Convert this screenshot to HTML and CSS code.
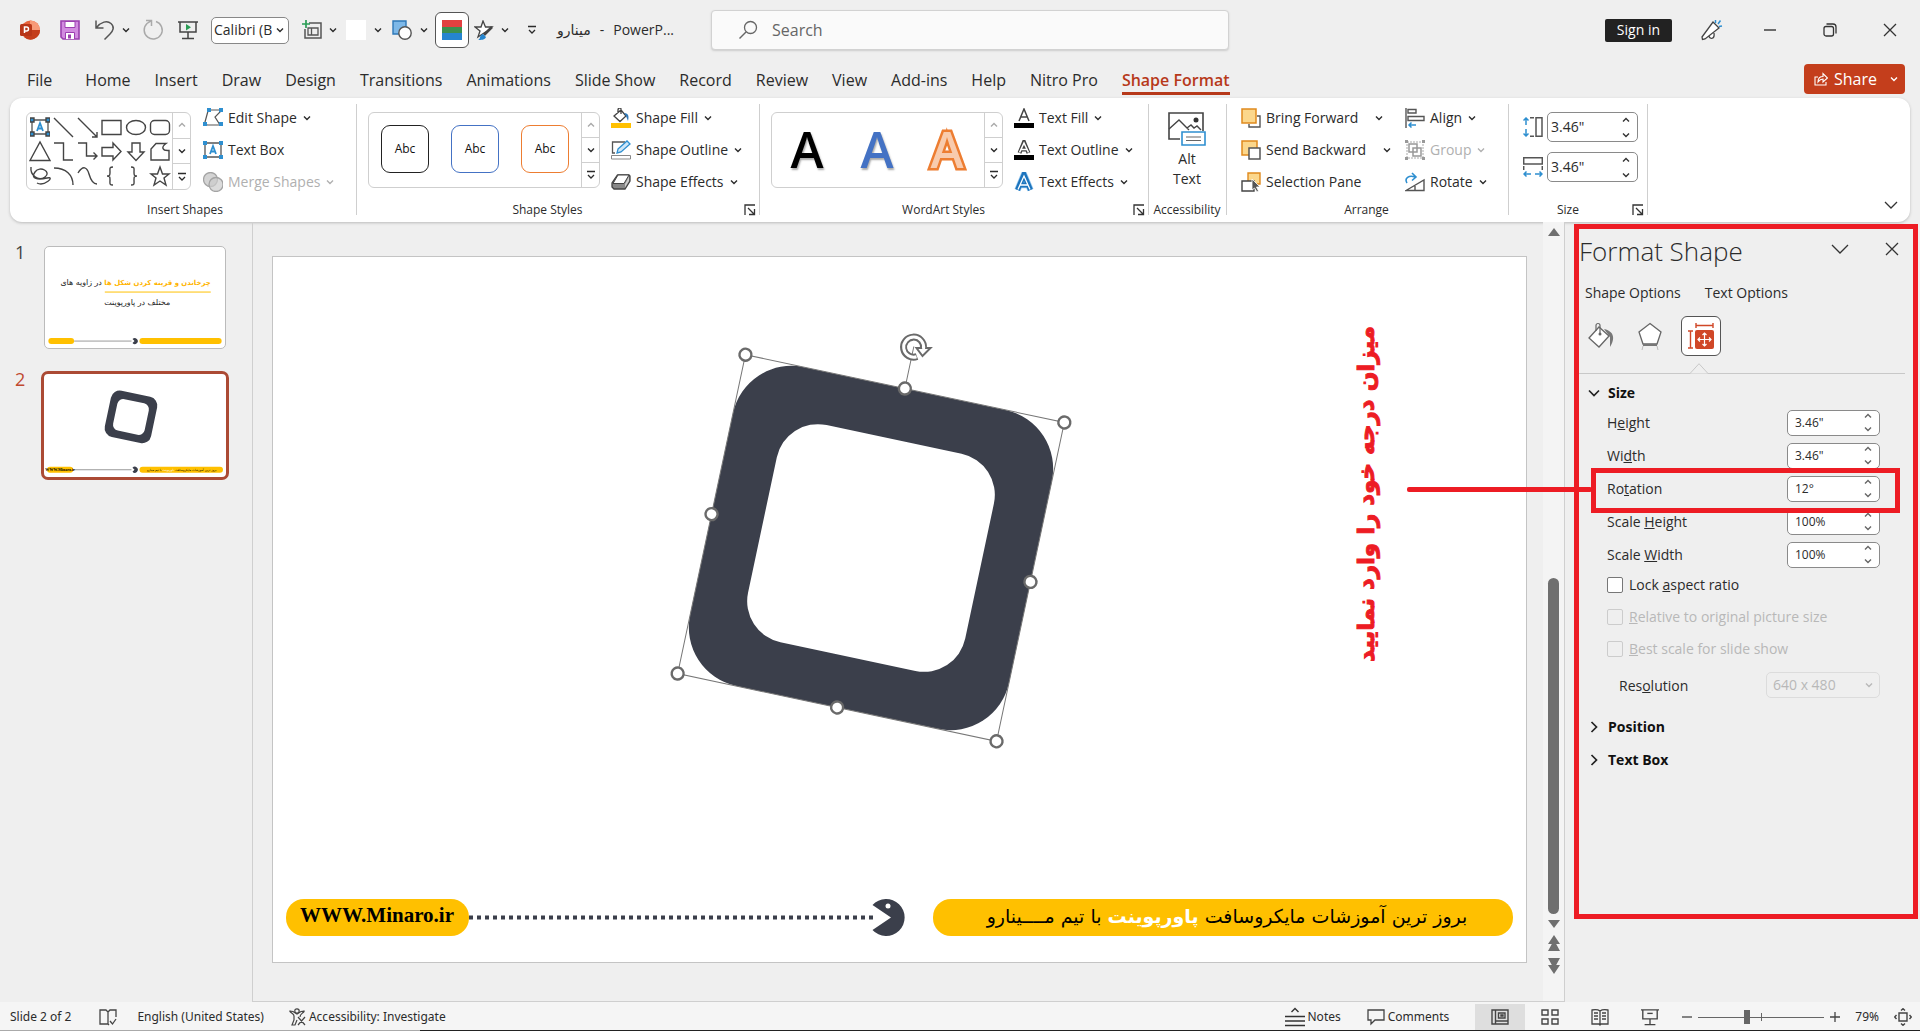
FILE: index.html
```html
<!DOCTYPE html>
<html lang="en">
<head>
<meta charset="utf-8">
<title>مینارو - PowerPoint</title>
<link rel="stylesheet" href="styles.css">
</head>
<body>
<svg class="defs" aria-hidden="true">
  <symbol id="chev" viewBox="0 0 8 8"><path d="M1 2.5 4 5.5 7 2.5" fill="none" stroke="currentColor" stroke-width="1.4"/></symbol>
  <symbol id="chev-up" viewBox="0 0 8 8"><path d="M1 5.5 4 2.5 7 5.5" fill="none" stroke="currentColor" stroke-width="1.4"/></symbol>
  <symbol id="more" viewBox="0 0 10 10"><path d="M1 1.5H9M2 5 5 8 8 5" fill="none" stroke="currentColor" stroke-width="1.3"/></symbol>
  <symbol id="launch" viewBox="0 0 12 12"><path d="M1 11V1H11M4 4 10 10M10.500 5V10.500H5" fill="none" stroke="#333" stroke-width="1.3"/></symbol>
  <symbol id="cross" viewBox="0 0 14 14"><path d="M1 1 13 13M13 1 1 13" stroke="#333" stroke-width="1.3"/></symbol>
  <symbol id="textbox" viewBox="0 0 20 20"><path d="M2 3H18V17H2Z" fill="#fff" stroke="#555" stroke-width="1.3"/><path d="M7 14 10 6 13 14M8 11.500H12" fill="none" stroke="#2e8fd0" stroke-width="1.8"/><path d="M0 1h4v4H0zM16 1h4v4h-4zM0 15h4v4H0zM16 15h4v4h-4z" fill="#2e8fd0"/></symbol>
  <symbol id="screen" viewBox="0 0 20 20"><path d="M0 2H20M2 2V12H18V2M10 12V18M4 18.500H16" fill="none" stroke="#444" stroke-width="1.5"/></symbol>
</svg>

<header class="titlebar">
  <div class="qat">
    <svg class="i20" viewBox="0 0 20 20"><circle cx="10.500" cy="10" r="9.500" fill="#e8643c"/><path d="M10 .5A9.500 9.500 0 0 1 20 10H10Z" fill="#f79a78"/><path d="M10 10H20A9.500 9.500 0 0 1 4 17Z" fill="#c43e1c"/><rect y="4" width="12" height="12" rx="1.500" fill="#b83618"/><path d="M4.500 13V7H6.500A1.900 1.900 0 0 1 6.500 11H4.500" fill="none" stroke="#fff" stroke-width="1.500"/></svg>
    <button class="ib" aria-label="Save"><svg class="i20" viewBox="0 0 20 20"><path d="M1 1H19V19H3L1 17Z" fill="#d28be0" stroke="#9c3fb0" stroke-width="1.600"/><path d="M5 1.500H15V7.500H5Z" fill="#fff" stroke="#9c3fb0"/><path d="M5.500 19V12.500H14.500V19" fill="#fff" stroke="#9c3fb0"/><path d="M8 14.500v4h3v-4z" fill="#9c3fb0"/></svg></button>
    <button class="ib" aria-label="Undo"><svg class="i22" viewBox="0 0 22 22"><path d="M2 1.500V9H9.500M2.500 8.500C7 3 13 1 17 4.500S19 12 16 15L10.500 20.500" fill="none" stroke="#555" stroke-width="1.500"/></svg></button>
    <button class="ib" aria-label="Undo options"><svg class="i8"><use href="#chev"/></svg></button>
    <button class="ib" aria-label="Repeat"><svg class="i22" viewBox="0 0 22 22"><path d="M4 1.500H9.500V7M14 2.500A9 9 0 1 1 5 4.500L9 1.800" fill="none" stroke="#a9a9a9" stroke-width="1.500"/></svg></button>
    <button class="ib" aria-label="From beginning"><svg class="i20" viewBox="0 0 20 20"><use href="#screen"/><path d="M8 4V10.500L13 7.200Z" fill="#2a9d55"/></svg></button>
    <label class="fontbox"><select aria-label="Font"><option>Calibri (Body)</option></select><svg class="i8"><use href="#chev"/></svg></label>
    <button class="ib" aria-label="New slide"><svg class="i20" viewBox="0 0 20 20"><path d="M7 3H19V18H3V9" fill="#eee" stroke="#555" stroke-width="1.500"/><path d="M6 8H16V15H6ZM9.500 8V15" fill="none" stroke="#555" stroke-width="1.300"/><path d="M4 0V8M0 4H8" stroke="#2a9d55" stroke-width="1.700"/></svg></button>
    <button class="ib" aria-label="New slide options"><svg class="i8"><use href="#chev"/></svg></button>
    <button class="ib" aria-label="Colour"><svg class="i20" viewBox="0 0 20 20"><path d="M0 0H20V20H0Z" fill="#fff"/></svg></button>
    <button class="ib" aria-label="Colour options"><svg class="i8"><use href="#chev"/></svg></button>
    <button class="ib" aria-label="Shapes"><svg class="i20" viewBox="0 0 20 20"><path d="M1 1H14V14H1Z" fill="#7db8e8" stroke="#2e78b8" stroke-width="1.400"/><circle cx="13" cy="13" r="6.200" fill="#fff" stroke="#555" stroke-width="1.400"/></svg></button>
    <button class="ib" aria-label="Shapes options"><svg class="i8"><use href="#chev"/></svg></button>
    <button class="ib swatch" aria-label="Gradient"><svg class="i20" viewBox="0 0 20 20"><path d="M0 0H20V7H0Z" fill="#e24040"/><path d="M0 7H20V13H0Z" fill="#3c8f4f"/><path d="M0 13H20V20H0Z" fill="#2585cf"/></svg></button>
    <button class="ib" aria-label="Shape effects"><svg class="i20" viewBox="0 0 20 20"><path d="M9 1 11.500 7H18L13 11 10 13 4 17 6 11 1 7H7Z" fill="#fff" stroke="#444" stroke-width="1.300"/><path d="M18 7 10 15" stroke="#444" stroke-width="2.500"/><path d="M4 20C7 19 5 15 9 14L12 17C11 20 7 20 4 20Z" fill="#2585cf"/></svg></button>
    <button class="ib" aria-label="Shape effects options"><svg class="i8"><use href="#chev"/></svg></button>
    <button class="ib" aria-label="Customize toolbar"><svg class="i10"><use href="#more"/></svg></button>
    <div class="doc"><span lang="fa">مینارو</span><span>-</span><span>PowerP...</span></div>
  </div>
  <label class="search"><svg class="i20" viewBox="0 0 20 20"><circle cx="12.500" cy="7.500" r="6" fill="none" stroke="#666" stroke-width="1.300"/><path d="M8 12 1.500 18.500" stroke="#666" stroke-width="1.400"/></svg><input type="text" placeholder="Search" aria-label="Search"></label>
  <div class="winbar">
    <button class="signin">Sign in</button>
    <button class="ib" aria-label="Feedback"><svg class="i22" viewBox="0 0 22 22"><path d="M12 3 18 9 4 20 1.500 20.500 1 18ZM8 17C9 21 14 20 13 14" fill="#fff" stroke="#444" stroke-width="1.300"/><path d="M14.500 4V1M17 5 19.500 1.500M18 7.500 21 7" stroke="#2e8fd0" stroke-width="1.500"/></svg></button>
    <button class="ib" aria-label="Minimize"><svg class="i14" viewBox="0 0 14 14"><path d="M1 7H13" stroke="#333" stroke-width="1.400"/></svg></button>
    <button class="ib" aria-label="Restore"><svg class="i14" viewBox="0 0 14 14"><rect x="1" y="3.500" width="9.500" height="9.500" rx="2" fill="none" stroke="#333" stroke-width="1.300"/><path d="M3.500 1H10A3 3 0 0 1 13 4V10.500" fill="none" stroke="#333" stroke-width="1.300"/></svg></button>
    <button class="ib" aria-label="Close"><svg class="i14"><use href="#cross"/></svg></button>
  </div>
</header>

<nav class="tabs">
  <a class="file" href="#">File</a><a href="#">Home</a><a href="#">Insert</a><a href="#">Draw</a><a href="#">Design</a><a href="#">Transitions</a><a href="#">Animations</a><a href="#">Slide Show</a><a href="#">Record</a><a href="#">Review</a><a href="#">View</a><a href="#">Add-ins</a><a href="#">Help</a><a href="#">Nitro Pro</a><a class="active" href="#">Shape Format</a>
  <button class="share"><svg class="i14" viewBox="0 0 14 14"><path d="M4 5H1V13H12V10M4 10C4 6 6 4.500 9 4.500V1.500L13.500 6 9 10V7C7 7 5.500 8 4 10Z" fill="none" stroke="#fff" stroke-width="1.100"/></svg><span>Share</span><svg class="i8"><use href="#chev"/></svg></button>
</nav>

<section class="ribbon">
  <div class="group g-insert">
    <div class="group-body">
      <div class="gallery">
        <svg class="shapes" viewBox="0 0 144 72" fill="none" stroke="#444" stroke-width="1.400">
          <svg x="2" y="2" width="20" height="20"><use href="#textbox"/></svg>
          <path d="M26 3 45 22M50 3 69 22M69 17V22H64M2 45.500 12 27 22 45.500ZM26 28H35.500V45H45M50 28H58.500V41H69M65.500 37.500 69 41 65.500 44.500"/>
          <path d="M74 5.500H93V19.500H74ZM74 32.500H85V28L93 36.500 85 45V41H74Z"/>
          <ellipse cx="108" cy="12.500" rx="9.500" ry="7"/><rect x="122.500" y="5.500" width="19" height="14" rx="4"/>
          <path d="M104 28H112V37H116L108 45.500 100 37H104ZM123 45V34L128 28.500H138C133 32 134 36 141 35.500V45Z"/>
          <path d="M3 52C2 60 10 67 17 62S12 50 7 57 10 65 19 63 16 72 9 68M26 53C38 53 45 60 45 70M50 58C55 50 59 52 61 59S66 69 69 69"/>
          <path d="M85 52C81 52 82 54 82 57S82 61 79 61C82 61 82 62 82 65S81 70 85 70M103 52C107 52 106 54 106 57S106 61 109 61C106 61 106 62 106 65S107 70 103 70"/>
          <path d="M132 52 134.500 59H141L136 63 138 70 132 66 126 70 128 63 123 59H129.500Z"/>
        </svg>
        <div class="steps"><button disabled aria-label="Previous row"><svg class="i8"><use href="#chev-up"/></svg></button><button aria-label="Next row"><svg class="i8"><use href="#chev"/></svg></button><button aria-label="All shapes"><svg class="i10"><use href="#more"/></svg></button></div>
      </div>
      <div class="cmds">
        <button class="cmd"><svg class="i20" viewBox="0 0 20 20"><path d="M5 3 2 14 4 17H17L12 9 17 4V2H5" fill="none" stroke="#555" stroke-width="1.200"/><path d="M4 0h4v4H4zM16 0h4v4h-4zM0 14h4v4H0zM16 14h4v4h-4z" fill="#2e8fd0"/></svg>Edit Shape<svg class="i8"><use href="#chev"/></svg></button>
        <button class="cmd"><svg class="i20"><use href="#textbox"/></svg>Text Box</button>
        <button class="cmd" disabled><svg class="i20" viewBox="0 0 20 20" stroke="#a4a4a4" stroke-width="1.300"><circle cx="7.500" cy="7.500" r="7" fill="#d4d4d4"/><circle cx="13" cy="12.500" r="7" fill="#ccc" fill-opacity=".7"/></svg>Merge Shapes<svg class="i8"><use href="#chev"/></svg></button>
      </div>
    </div>
    <div class="group-title">Insert Shapes</div>
  </div>

  <div class="group g-styles">
    <div class="group-body">
      <div class="gallery wide">
        <div class="tiles"><button class="tile">Abc</button><button class="tile blue">Abc</button><button class="tile orange">Abc</button></div>
        <div class="steps"><button disabled aria-label="Previous row"><svg class="i8"><use href="#chev-up"/></svg></button><button aria-label="Next row"><svg class="i8"><use href="#chev"/></svg></button><button aria-label="All styles"><svg class="i10"><use href="#more"/></svg></button></div>
      </div>
      <div class="cmds">
        <button class="cmd"><svg class="i20" viewBox="0 0 20 20"><path d="M3 8 10 2 15 8 9 13.500ZM10 6V1C10-.5 7-.5 7 2V5" fill="#fff" stroke="#444" stroke-width="1.300"/><path d="M13 5C18 5 18 9 17 13L15 8Z" fill="#2e78b8"/><path d="M0 15H20V20H0Z" fill="#ffc000"/></svg>Shape Fill<svg class="i8"><use href="#chev"/></svg></button>
        <button class="cmd"><svg class="i20" viewBox="0 0 20 20"><path d="M14 2H1.500V13H4" fill="none" stroke="#555" stroke-width="1.300"/><path d="M7 9 16 1 19 4 10 12 6 13Z" fill="#cfe6f7" stroke="#2e8fd0" stroke-width="1.300"/><path d="M.5 15.500H19.500V19H.5Z" fill="#fff" stroke="#888"/></svg>Shape Outline<svg class="i8"><use href="#chev"/></svg></button>
        <button class="cmd"><svg class="i20" viewBox="0 0 20 20"><path d="M6.500 3H18L19 4V9L14 17H3L1 15V11Z" fill="#888" stroke="#444" stroke-width="1.300"/><path d="M7 3H18L13 11.500H2Z" fill="#fff" stroke="#444"/><path d="M18 4.500V9L14 15.500V12Z" fill="#ccc"/></svg>Shape Effects<svg class="i8"><use href="#chev"/></svg></button>
      </div>
    </div>
    <div class="group-title">Shape Styles</div><button class="launcher" aria-label="Shape styles settings"><svg><use href="#launch"/></svg></button>
  </div>

  <div class="group g-wordart">
    <div class="group-body">
      <div class="gallery wide">
        <div class="tiles"><button class="wa">A</button><button class="wa wa-blue">A</button><button class="wa wa-orange">A</button></div>
        <div class="steps"><button disabled aria-label="Previous row"><svg class="i8"><use href="#chev-up"/></svg></button><button aria-label="Next row"><svg class="i8"><use href="#chev"/></svg></button><button aria-label="All styles"><svg class="i10"><use href="#more"/></svg></button></div>
      </div>
      <div class="cmds">
        <button class="cmd"><svg class="i20" viewBox="0 0 20 20"><path d="M5 13 10 1 15 13M6.500 9H13.500" fill="none" stroke="#444" stroke-width="1.500"/><path d="M0 15H20V20H0Z"/></svg>Text Fill<svg class="i8"><use href="#chev"/></svg></button>
        <button class="cmd"><svg class="i20" viewBox="0 0 20 20"><path d="M5.500 13 10 2 14.500 13M7.500 9.500H12.500" fill="none" stroke="#444" stroke-width="4"/><path d="M5.500 12.500 10 3 14.500 12.500M7.500 9.500H12.500" fill="none" stroke="#fff" stroke-width="1.600"/><path d="M0 15H20V20H0Z"/></svg>Text Outline<svg class="i8"><use href="#chev"/></svg></button>
        <button class="cmd"><svg class="i20" viewBox="0 0 20 20" fill="none"><path d="M3.500 18 10 2.500 16.500 18M6 13H14" stroke="#9ccbf0" stroke-width="6.500"/><path d="M3.500 18 10 2.500 16.500 18M6 13H14" stroke="#1c74bd" stroke-width="5"/><path d="M4 17.500 10 4 16 17.500M6.500 13H13.500" stroke="#fff" stroke-width="1.300"/></svg>Text Effects<svg class="i8"><use href="#chev"/></svg></button>
      </div>
    </div>
    <div class="group-title">WordArt Styles</div><button class="launcher" aria-label="WordArt settings"><svg><use href="#launch"/></svg></button>
  </div>

  <div class="group g-alt">
    <div class="group-body">
      <button class="big"><svg viewBox="0 0 40 36"><path d="M13 28H2V2H36V20" fill="none" stroke="#444" stroke-width="1.600"/><path d="M2 18 12 9 22 19M20 17 24 14 27 17 30 15 34 19" fill="none" stroke="#444" stroke-width="1.400"/><circle cx="29" cy="9" r="2.500" fill="#333"/><path d="M15 21H38V34H15Z" fill="#fff" stroke="#2e8fd0" stroke-width="1.600"/><path d="M19 26H34M19 29.500H34" stroke="#666" stroke-width="1.200"/></svg>Alt<br>Text</button>
    </div>
    <div class="group-title">Accessibility</div>
  </div>

  <div class="group g-arrange">
    <div class="group-body">
      <div class="cmds first">
        <button class="cmd split"><svg class="i20" viewBox="0 0 20 20"><path d="M16 8H19V19H8V16" fill="none" stroke="#555" stroke-width="1.400"/><path d="M1 1H15V15H1Z" fill="#fbd78c" stroke="#e08a1e" stroke-width="1.500"/></svg>Bring Forward<svg class="i8"><use href="#chev"/></svg></button>
        <button class="cmd split"><svg class="i20" viewBox="0 0 20 20"><path d="M1 1H16V15H1Z" fill="#fbd78c" stroke="#e08a1e" stroke-width="1.500"/><path d="M8 8H19V19H8Z" fill="#fff" stroke="#555" stroke-width="1.500"/></svg>Send Backward<svg class="i8"><use href="#chev"/></svg></button>
        <button class="cmd"><svg class="i20" viewBox="0 0 20 20"><path d="M7 1H19V12H7Z" fill="#fbd78c" stroke="#e08a1e" stroke-width="1.400"/><path d="M1 9H13V19H1Z" fill="#fff" stroke="#444" stroke-width="1.400"/><path d="M11 7V18L13.500 16 16 20 17.500 19 15.500 15H19Z" fill="#555" stroke="#fff" stroke-width=".8"/></svg>Selection Pane</button>
      </div>
      <div class="cmds">
        <button class="cmd"><svg class="i20" viewBox="0 0 20 20"><path d="M1 0V20M3 1.500H11V5H3ZM3 8.500H19V12.500H3Z" fill="none" stroke="#555" stroke-width="1.400"/><path d="M11 17H4M6.500 14.500 4 17 6.500 19.500" fill="none" stroke="#2e8fd0" stroke-width="1.500"/></svg>Align<svg class="i8"><use href="#chev"/></svg></button>
        <button class="cmd" disabled><svg class="i20" viewBox="0 0 20 20"><path d="M2 2H18V18H2Z" fill="none" stroke="#aaa" stroke-dasharray="2 1"/><path d="M4 4H12V12H4ZM8 8H16V16H8Z" fill="none" stroke="#999" stroke-width="1.500"/><path d="M0 0h3v3H0zM17 0h3v3h-3zM0 17h3v3H0zM17 17h3v3h-3z" fill="#999"/></svg>Group<svg class="i8"><use href="#chev"/></svg></button>
        <button class="cmd"><svg class="i20" viewBox="0 0 20 20"><path d="M1 18.500 19 8V18.500ZM10 14V18" fill="none" stroke="#555" stroke-width="1.400"/><path d="M2 11C-1 6 4 3 10 5M7 1 11 5 7 8.500" fill="none" stroke="#2e8fd0" stroke-width="1.600"/></svg>Rotate<svg class="i8"><use href="#chev"/></svg></button>
      </div>
    </div>
    <div class="group-title">Arrange</div>
  </div>

  <div class="group g-size">
    <div class="group-body">
      <label class="dim"><svg class="i20" viewBox="0 0 20 20"><path d="M3 8V1M.5 3.500 3 1 5.500 3.500M3 12V19M.5 16.500 3 19 5.500 16.500" fill="none" stroke="#2e8fd0" stroke-width="1.500"/><path d="M7 .7H11M7 19.300H11M13 .7H19V19.300H13Z" fill="none" stroke="#555" stroke-width="1.500"/></svg><span class="spin tall"><input type="text" value="3.46&quot;" aria-label="Shape height"><span class="arrows"><svg class="i8"><use href="#chev-up"/></svg><svg class="i8"><use href="#chev"/></svg></span></span></label>
      <label class="dim"><svg class="i20" viewBox="0 0 20 20"><path d="M8 17H1M3.500 14.500 1 17 3.500 19.500M12 17H19M16.500 14.500 19 17 16.500 19.500" fill="none" stroke="#2e8fd0" stroke-width="1.500"/><path d="M.7 9V13M19.300 9V13M.7 .7H19.300V7H.7Z" fill="none" stroke="#555" stroke-width="1.500"/></svg><span class="spin tall"><input type="text" value="3.46&quot;" aria-label="Shape width"><span class="arrows"><svg class="i8"><use href="#chev-up"/></svg><svg class="i8"><use href="#chev"/></svg></span></span></label>
    </div>
    <div class="group-title">Size</div><button class="launcher" aria-label="Size settings"><svg><use href="#launch"/></svg></button>
  </div>
  <button class="collapse ib" aria-label="Collapse ribbon"><svg class="i14" viewBox="0 0 14 14"><path d="M1 4 7 10 13 4" fill="none" stroke="#333" stroke-width="1.300"/></svg></button>
</section>

<main class="body">
  <aside class="thumbs">
    <div class="thumb"><span>1</span>
      <svg viewBox="0 0 181 102" lang="fa">
        <text class="t-line" x="167" y="38" direction="rtl"><tspan class="t-gold">چرخاندن و قرینه کردن شکل ها</tspan> در زاویه های</text>
        <path d="M60 45.500H167" stroke="#ffc000"/>
        <text class="t-line" x="126" y="59" direction="rtl">مختلف در پاورپوینت</text>
        <g id="strip"><rect x="3" y="92" width="26" height="6" rx="3" fill="#ffc000"/><rect x="95" y="92" width="83" height="6" rx="3" fill="#ffc000"/><path d="M29 95H87" stroke="#999"/><path d="M88 93A3 3 0 1 1 88 97L90 95Z" fill="#3b3f4b"/></g>
      </svg></div>
    <div class="thumb current"><span>2</span>
      <svg viewBox="0 0 181 102">
        <g transform="rotate(12 86.500 42.500)"><rect x="63" y="19" width="47" height="47" rx="9" fill="#3b3f4b"/><rect x="70.500" y="26.500" width="32" height="32" rx="6" fill="#fff"/></g>
        <use href="#strip"/>
        <text class="t-tiny" x="16" y="96" text-anchor="middle">WWW.Minaro.ir</text>
        <text class="t-fa" x="137" y="96" text-anchor="middle" direction="rtl">بروز ترین آموزشات مایکروسافت <tspan fill="#fff">پاورپوینت</tspan> با تیم مینارو</text>
      </svg></div>
  </aside>

  <section class="stage">
    <svg class="slide" viewBox="0 0 1255 707">
      <g transform="translate(599 292) rotate(12)">
        <rect x="-163" y="-163" width="326" height="326" rx="60" fill="#3b3f4b"/>
        <rect x="-111" y="-111" width="222" height="222" rx="42" fill="#fff"/>
        <path d="M-163-163H163V163H-163ZM0-163V-206" fill="none" stroke="#777"/>
        <g fill="#fff" stroke="#6a6a6a" stroke-width="2.400"><circle cx="-163" cy="-163" r="6"/><circle cx="0" cy="-163" r="6"/><circle cx="163" cy="-163" r="6"/><circle cx="-163" cy="0" r="6"/><circle cx="163" cy="0" r="6"/><circle cx="-163" cy="163" r="6"/><circle cx="0" cy="163" r="6"/><circle cx="163" cy="163" r="6"/></g>
      </g>
      <g fill="none" transform="translate(641.500 91)">
        <path d="M3.500 9.500A10 10 0 1 1 10 1" stroke="#6a6a6a" stroke-width="7"/>
        <path d="M3 1H17L9 9Z" fill="#fff" stroke="#6a6a6a" stroke-width="2"/>
        <path d="M3 9.700A10 10 0 1 1 10 2" stroke="#fff" stroke-width="3"/>
      </g>
      <text class="callout" transform="translate(1102 238) rotate(-90)" text-anchor="middle" direction="rtl" lang="fa">میزان درجه خود را وارد نمایید</text>
      <rect x="14" y="643" width="183" height="37" rx="18" fill="#ffc000"/>
      <text class="site" x="105" y="666" text-anchor="middle">WWW.Minaro.ir</text>
      <path d="M197 661.500H601" stroke="#3b3f4b" stroke-width="4" stroke-dasharray="4 4"/>
      <path d="M600.500 649A18.500 18.500 0 1 1 600.500 674L619 661.500Z" fill="#3b3f4b"/><circle cx="616" cy="650" r="2.500" fill="#fff"/>
      <rect x="661" y="643" width="580" height="37" rx="18" fill="#ffc000"/>
      <text class="banner" x="955" y="667" text-anchor="middle" direction="rtl" lang="fa">بروز ترین آموزشات مایکروسافت <tspan class="strong">پاورپوینت</tspan> با تیم مــــینارو</text>
    </svg>
    <div class="scroll" aria-hidden="true">
      <svg viewBox="0 0 12 8"><path d="M6 0 12 8H0Z"/></svg>
      <div class="track"><div class="grip"></div></div>
      <svg viewBox="0 0 12 8"><path d="M0 0H12L6 8Z"/></svg>
      <svg class="dbl" viewBox="0 0 12 16"><path d="M6 0 12 9H0ZM6 5 12 16H0Z"/></svg>
      <svg class="dbl" viewBox="0 0 12 16"><path d="M0 0H12L6 11ZM0 7H12L6 16Z"/></svg>
    </div>
  </section>

  <aside class="pane">
    <div class="pane-head"><h2>Format Shape</h2><button class="ib" aria-label="Pane options"><svg class="i18" viewBox="0 0 18 18"><path d="M1 5 9 13 17 5" fill="none" stroke="#333" stroke-width="1.300"/></svg></button><button class="ib" aria-label="Close pane"><svg class="i14"><use href="#cross"/></svg></button></div>
    <div class="pane-tabs"><a href="#">Shape Options</a><a href="#">Text Options</a></div>
    <div class="pane-icons">
      <button class="ib" aria-label="Fill and line"><svg class="i28" viewBox="0 0 28 28"><path d="M2 16 12 5 22 14 12 25Z" fill="#fff" stroke="#666" stroke-width="1.300"/><path d="M9 9V3.500A2 2 0 0 1 13 3.500V12" fill="none" stroke="#666" stroke-width="1.200"/><circle cx="13" cy="12" r="1.500" fill="#666"/><path d="M17 7C26 9 29 15 23 25L23 15Z" fill="#777"/></svg></button>
      <button class="ib" aria-label="Effects"><svg class="i28" viewBox="0 0 28 28"><path d="M13 1.500 24 10 20 22H6L2 10Z" fill="#fff" stroke="#666" stroke-width="1.300"/><path d="M6 23H20" stroke="#777" stroke-width="2"/><path d="M6 24 5 28M20 24 21 28" stroke="#bbb"/></svg></button>
      <button class="ib on" aria-label="Size and properties"><svg class="i28" viewBox="0 0 28 28"><rect x="8" y="8" width="19" height="19" rx="2" fill="#d04727"/><path d="M9 3.500H26M9 1V6M26 1V6M3.500 9V26M1 9H6M1 26H6" stroke="#d04727" stroke-width="1.400"/><path d="M17.500 11V24M11 17.500H24M15.500 13 17.500 11 19.500 13M15.500 22 17.500 24 19.500 22M13 15.500 11 17.500 13 19.500M22 15.500 24 17.500 22 19.500" fill="none" stroke="#fff" stroke-width="1.200"/></svg></button>
    </div>
    <svg class="notch" viewBox="0 0 18 11"><path d="M0 10.500 9 .7 18 10.500" fill="#efefef" stroke="#c8c8c8"/></svg>
    <div class="pane-body">
      <button class="sect"><svg class="i12" viewBox="0 0 12 12"><path d="M1 3.500 6 8.500 11 3.500" fill="none" stroke="#222" stroke-width="1.700"/></svg>Size</button>
      <div class="row"><label for="h">H<u>e</u>ight</label><span class="spin"><input id="h" type="text" value="3.46&quot;"><span class="arrows"><svg class="i8"><use href="#chev-up"/></svg><svg class="i8"><use href="#chev"/></svg></span></span></div>
      <div class="row"><label for="w">Wi<u>d</u>th</label><span class="spin"><input id="w" type="text" value="3.46&quot;"><span class="arrows"><svg class="i8"><use href="#chev-up"/></svg><svg class="i8"><use href="#chev"/></svg></span></span></div>
      <div class="row marked"><label for="r">Ro<u>t</u>ation</label><span class="spin"><input id="r" type="text" value="12°"><span class="arrows"><svg class="i8"><use href="#chev-up"/></svg><svg class="i8"><use href="#chev"/></svg></span></span></div>
      <div class="row"><label for="sh">Scale <u>H</u>eight</label><span class="spin"><input id="sh" type="text" value="100%"><span class="arrows"><svg class="i8"><use href="#chev-up"/></svg><svg class="i8"><use href="#chev"/></svg></span></span></div>
      <div class="row"><label for="sw">Scale <u>W</u>idth</label><span class="spin"><input id="sw" type="text" value="100%"><span class="arrows"><svg class="i8"><use href="#chev-up"/></svg><svg class="i8"><use href="#chev"/></svg></span></span></div>
      <label class="check"><input type="checkbox"><span>Lock <u>a</u>spect ratio</span></label>
      <label class="check off"><input type="checkbox" disabled><span><u>R</u>elative to original picture size</span></label>
      <label class="check off"><input type="checkbox" disabled><span><u>B</u>est scale for slide show</span></label>
      <div class="row res"><label for="res">Res<u>o</u>lution</label><span class="drop"><select id="res" disabled><option>640 x 480</option></select><svg class="i8"><use href="#chev"/></svg></span></div>
      <button class="sect"><svg class="i12" viewBox="0 0 12 12"><path d="M3.500 1 8.500 6 3.500 11" fill="none" stroke="#222" stroke-width="1.700"/></svg>Position</button>
      <button class="sect"><svg class="i12" viewBox="0 0 12 12"><path d="M3.500 1 8.500 6 3.500 11" fill="none" stroke="#222" stroke-width="1.700"/></svg>Text Box</button>
    </div>
    <div class="frame"></div>
  </aside>
</main>

<footer class="status">
  <span class="s-slide">Slide 2 of 2</span>
  <svg class="i18 s-book" viewBox="0 0 18 18"><path d="M9 16H1V2H7L9 4V16L10 17M9 4 11 2H17V9M11 13 13.500 16 17 11" fill="none" stroke="#444" stroke-width="1.300"/></svg>
  <span class="s-lang">English (United States)</span>
  <button class="s-btn s-acc"><svg class="i18" viewBox="0 0 18 18"><circle cx="9" cy="3" r="2.200" fill="none" stroke="#444" stroke-width="1.200"/><path d="M1.500 3C4 6 6 6 6 8V12L4 17H7L9 12M16.500 3C14 6 12 6 12 9M10 9 17 17M17 9 10 17M1.500 3 5 3.500 9 6 13 3.500 16.500 3" fill="none" stroke="#444" stroke-width="1.200"/></svg>Accessibility: Investigate</button>
  <button class="s-btn s-notes"><svg class="i20" viewBox="0 0 20 20"><path d="M0 9.500H20M0 14H20M0 18.500H20M6.500 5 10 1.500 13.500 5" fill="none" stroke="#333" stroke-width="1.400"/></svg>Notes</button>
  <button class="s-btn s-com"><svg class="i18" viewBox="0 0 18 18"><path d="M1 2H17V12H8L4 16V12H1Z" fill="none" stroke="#444" stroke-width="1.300"/></svg>Comments</button>
  <div class="views">
    <button class="on" aria-label="Normal"><svg class="i18" viewBox="0 0 18 18"><path d="M1 2H17V16H1ZM4.500 2V16M7.500 5H14V10H7.500ZM4.500 13H17M10 7h2v1h-2z" fill="none" stroke="#444" stroke-width="1.400"/></svg></button>
    <button aria-label="Slide sorter"><svg class="i18" viewBox="0 0 18 18"><path d="M1 2H7V7H1ZM11 2H17V7H11ZM1 11H7V16H1ZM11 11H17V16H11Z" fill="none" stroke="#444" stroke-width="1.400"/></svg></button>
    <button aria-label="Reading view"><svg class="i18" viewBox="0 0 18 18"><path d="M9 3C7 1.500 4 1.500 1 2V16H8L9 17 10 16H17V2C14 1.500 11 1.500 9 3V16M3 5H7M3 8H7M3 11H7M11 5H15M11 8H15M11 11H15" fill="none" stroke="#444" stroke-width="1.300"/></svg></button>
    <button aria-label="Slide show"><svg class="i18" viewBox="0 0 20 20"><use href="#screen"/><path d="M7 6H13" stroke="#444" stroke-width="1.500"/></svg></button>
  </div>
  <div class="zoom"><button aria-label="Zoom out"><svg class="i10" viewBox="0 0 10 10"><path d="M0 5H10" stroke="#444" stroke-width="1.300"/></svg></button><input type="range" min="0" max="100" value="38" aria-label="Zoom"><button aria-label="Zoom in"><svg class="i10" viewBox="0 0 10 10"><path d="M0 5H10M5 0V10" stroke="#444" stroke-width="1.300"/></svg></button><span>79%</span>
  <button aria-label="Fit to window"><svg class="i18" viewBox="0 0 18 18"><path d="M5 5H13V13H5ZM7 2.500 9 .7 11 2.500M7 15.500 9 17.300 11 15.500M2.500 7 .7 9 2.500 11M15.500 7 17.300 9 15.500 11" fill="none" stroke="#444" stroke-width="1.400"/></svg></button></div>
</footer>
</body>
</html>
```
FILE: styles.css
```css
*, *::before, *::after { box-sizing: border-box; }
body {
  margin: 0; min-height: 100vh; display: flex; flex-direction: column;
  background: #efefef; color: #2b2b2b;
  font: 14px/20px "Open Sans", "Noto Sans", "DejaVu Sans", sans-serif;
}
button, input, select { font: inherit; color: inherit; border: 0; background: none; padding: 0; margin: 0; }
select { appearance: none; }
button { display: flex; align-items: center; white-space: nowrap; }
a { color: inherit; text-decoration: none; }
svg { flex: none; display: block; }
.defs { width: 0; height: 0; position: absolute; }
.i8 { width: 8px; height: 8px; }
.i10 { width: 10px; height: 10px; }
.i12 { width: 12px; height: 12px; }
.i14 { width: 14px; height: 14px; }
.i18 { width: 18px; height: 18px; }
.i20 { width: 20px; height: 20px; }
.i22 { width: 22px; height: 22px; }
.i28 { width: 28px; height: 28px; }

/* Title bar */
.titlebar { display: flex; align-items: center; height: 60px; }
.qat {
  display: grid; align-items: center; flex: none; padding-left: 20px; width: 711px;
  grid-template-columns: 40px 34px 28px 20px 36px 33px 91px 27px 17px 28px 18px 28px 15px 39px 27px 26px 30px auto;
}
.swatch { width: 34px; height: 36px; justify-content: center; background: #fff; border: 1px solid #555; border-radius: 6px; }
.fontbox { display: flex; align-items: center; gap: 4px; width: 78px; height: 27px; padding: 0 4px 0 2px; background: #fff; border: 1px solid #888; border-radius: 5px; }
.fontbox select { width: 58px; font-size: 14px; overflow: hidden; white-space: nowrap; text-overflow: clip; }
.doc { display: flex; gap: 9px; font-size: 14px; white-space: nowrap; }
.search { display: flex; align-items: center; gap: 14px; flex: 0 1 518px; height: 40px; padding: 0 26px; background: #fafafa; border: 1px solid #d2d2d2; border-radius: 4px; box-shadow: 0 1px 2px #ccc; }
.search input { flex: 1; font-size: 16px; outline: 0; }
.search input::placeholder { color: #666; opacity: 1; }
.winbar { display: flex; align-items: center; margin-left: auto; padding-right: 23px; gap: 46px; }
.signin { height: 23px; padding: 0 12px; margin-right: -17px; background: #222; color: #fff; border-radius: 2px; }
.winbar .ib:nth-child(2) { margin-right: -6px; }

/* Ribbon tabs */
.tabs { display: flex; align-items: center; gap: 24px; height: 38px; padding: 0 15px 0 27px; font-size: 16px; white-space: nowrap; }
.tabs a { height: 32px; line-height: 34px; border-bottom: 3px solid transparent; }
.tabs .file { margin-right: 9px; }
.tabs .active { color: #b7391a; font-weight: 600; border-color: #b7391a; }
.share { height: 30px; width: 101px; margin-left: auto; padding: 0 7px 0 10px; gap: 6px; background: #c43e1c; color: #fff; border-radius: 4px; font-size: 16px; }
.share .i8 { margin-left: auto; }

/* Ribbon */
.ribbon { display: flex; margin: 0 10px; background: #fff; border-radius: 12px; box-shadow: 0 1px 3px #bbb; flex: none; }
.group {
  position: relative; display: flex; flex-direction: column; height: 124px; padding: 6px 1px 4px;
  background: linear-gradient(#cfcfcf, #cfcfcf) right 6px / 1px 111px no-repeat;
}
.group-body { display: flex; }
.group-title { margin-top: auto; text-align: center; font-size: 12px; line-height: 16px; }
.launcher { position: absolute; right: 4px; bottom: 6px; }
.launcher svg { width: 12px; height: 12px; }
.g-insert { width: 347px; padding-left: 16px; }
.g-styles { width: 403px; padding-left: 11px; }
.g-wordart { width: 389px; padding-left: 11px; }
.g-insert .group-title { padding-right: 12px; }
.g-styles .group-title, .g-wordart .group-title { padding-right: 32px; }
.g-alt { width: 78px; padding-right: 3px; }
.g-arrange { width: 282px; padding-left: 14px; }
.g-arrange .group-title { padding-right: 16px; }
.g-size { width: 139px; padding-left: 14px; }
.g-size .group-body { flex-direction: column; gap: 10px; padding-top: 8px; }
.g-size .group-title { padding-right: 34px; }
.gallery { display: flex; height: 78px; margin: 8px 12px 0 0; border: 1px solid #cfcfcf; border-radius: 6px; }
.gallery.wide { width: 232px; height: 76px; margin-right: 11px; }
.shapes { width: 144px; height: 72px; margin: 2px 0 0 1px; }
.steps { display: flex; flex-direction: column; width: 18px; margin-left: auto; border-left: 1px solid #cfcfcf; }
.steps button { flex: 1; justify-content: center; }
.steps button + button { border-top: 1px solid #cfcfcf; }
.steps button:disabled { color: #aaa; }
.tiles { display: flex; flex: 1; align-items: center; gap: 22px; padding: 0 0 2px 12px; }
.tile { width: 48px; height: 48px; justify-content: center; border: 1px solid #222; border-radius: 9px; font-size: 12px; color: #111; }
.tile.blue { border-color: #4472c4; }
.tile.orange { border-color: #ed7d31; }
.wa { width: 46px; justify-content: center; font-size: 50px; line-height: 60px; font-weight: 600; color: #000; text-shadow: 1px 2px 2px #aaa; }
.wa + .wa { margin-left: 2px; }
.wa-blue { color: #4472c4; }
.wa-orange { color: #f8cbad; -webkit-text-stroke: 5px #ed7d31; paint-order: stroke fill; text-shadow: none; }
.cmds { display: flex; flex-direction: column; gap: 6px; padding-top: 1px; }
.cmds.first { width: 164px; }
.cmd { height: 26px; gap: 5px; }
.cmd > .i8 { margin-left: 1px; }
.cmd.split > .i8 { margin-left: 12px; }
.cmd:disabled { color: #b0b0b0; }
.big { flex-direction: column; width: 100%; padding-top: 7px; }
.big svg { width: 40px; height: 36px; margin-bottom: 2px; }
.dim { display: flex; align-items: center; gap: 4px; }
.collapse { margin: auto 12px 10px auto; }

/* Number fields */
.spin { display: flex; align-items: center; width: 93px; height: 26px; padding: 0 7px; background: #fff; border: 1px solid #8a8a8a; border-radius: 5px; }
.spin input { width: 60px; flex: 1; min-width: 0; font-size: 12px; outline: 0; }
.spin.tall { width: 91px; height: 30px; padding-left: 3px; }
.spin.tall input { font-size: 14px; }
.arrows { display: flex; flex-direction: column; gap: 5px; color: #666; }
.spin.tall .arrows { gap: 7px; color: #333; }

/* Work area */
.body { display: flex; flex: 1; }
.thumbs { width: 253px; flex: none; padding: 24px 23px 0 15px; border-right: 1px solid #cfcfcf; }
.thumb { display: flex; justify-content: space-between; align-items: flex-start; font-size: 18px; line-height: 12px; color: #444; padding-right: 3px; }
.thumb svg { width: 182px; height: 103px; background: #fff; border: 1px solid #bbb; border-radius: 5px; }
.thumb + .thumb { margin-top: 22px; padding-right: 0; }
.thumb.current { color: #c0492f; line-height: 16px; }
.thumb.current svg { width: 188px; height: 109px; border: 3px solid #ab4a34; border-radius: 7px; }
.t-line { font: 8px "DejaVu Sans", sans-serif; fill: #222; }
.t-gold { font-weight: 700; font-size: 7px; fill: #ffb400; }
.t-tiny { font: 700 4px "Liberation Serif", serif; }
.t-fa { font: 3px "DejaVu Sans", sans-serif; }
.stage { display: flex; flex: 1; align-items: stretch; min-width: 0; padding-left: 19px; border-bottom: 1px solid #cfcfcf; }
.slide { flex: 1 1 0; min-width: 0; align-self: flex-start; margin: 34px 16px 38px 0; background: #fff; outline: 1px solid #c4c4c4; outline-offset: -1px; }
.callout { font: 700 23px "DejaVu Sans", sans-serif; fill: #ed1c24; stroke: #ed1c24; stroke-width: 1px; }
.site { font: 700 21px "Liberation Serif", serif; }
.banner { font: 19px "DejaVu Sans", sans-serif; }
.strong { font-weight: 700; fill: #fff; }
.scroll { display: flex; flex-direction: column; align-items: center; width: 22px; padding: 6px 0 27px; background: #f4f4f4; border-right: 1px solid #cfcfcf; fill: #6f6f6f; }
.scroll svg { width: 12px; height: 8px; }
.scroll .dbl { height: 16px; margin-top: 7px; }
.track { flex: 1; width: 11px; padding: 342px 0 6px; display: flex; }
.grip { flex: 1; background: #6f6f6f; border-radius: 6px; }

/* Format pane */
.pane { position: relative; width: 355px; flex: none; padding: 9px 15px 0 14px; }
.pane-head { display: flex; align-items: center; height: 40px; padding-right: 6px; }
.pane-head h2 { flex: 1; margin: 0; font-size: 26px; line-height: 40px; font-weight: 300; }
.pane-head button { margin-bottom: 4px; }
.pane-head button + button { margin-left: 36px; }
.pane-tabs { display: flex; gap: 24px; padding: 12px 6px 11px; }
.pane-icons { display: flex; align-items: center; height: 40px; margin-top: 2px; padding-left: 8px; gap: 22px; }
.pane-icons .on { width: 40px; height: 40px; justify-content: center; margin-left: -6px; background: #fff; border: 1px solid #555; border-radius: 6px; }
.notch { width: 18px; height: 11px; margin: 7px 0 -1px 111px; position: relative; }
.pane-body { border-top: 1px solid #c8c8c8; padding: 2px 25px 0 28px; }
.sect { height: 33px; gap: 8px; margin-left: -19px; font-weight: 700; color: #111; }
.row { position: relative; display: flex; align-items: center; justify-content: space-between; height: 33px; }
.row label { padding-top: 1px; }
.sect + .row { margin-top: -3px; }
.marked::before { content: ""; position: absolute; z-index: 1; left: -16px; right: -20px; top: -4px; height: 45px; border: 5px solid #ed1c24; }
.marked::after { content: ""; position: absolute; z-index: 1; left: -200px; width: 185px; top: 15px; height: 5px; background: #ed1c24; border-radius: 2px; }
.check { display: flex; align-items: center; gap: 6px; height: 32px; }
.check input { appearance: none; width: 16px; height: 16px; background: #fff; border: 1px solid #777; border-radius: 2px; }
.row + .check { margin-top: -2px; }
.off { color: #b8b8b8; }
.off input { background: none; border-color: #ccc; }
.res { height: 40px; padding-left: 12px; }
.drop { display: flex; align-items: center; width: 114px; height: 26px; padding: 0 6px; border: 1px solid #dcdcdc; border-radius: 5px; color: #b8b8b8; }
.drop select { flex: 1; opacity: 1; }
.res + .sect { margin-top: 5px; }
.frame { position: absolute; left: 9px; right: 2px; top: 2px; bottom: 83px; border: 5px solid #ed1c24; pointer-events: none; }

/* Status bar */
.status {
  display: flex; align-items: center; height: 29px; padding: 2px 8px 1px 10px; white-space: nowrap;
  font-family: "Noto Sans", "Open Sans", sans-serif; font-size: 12px;
  background: linear-gradient(90deg, #aaa 420px, #222 420px) bottom / 100% 1px no-repeat #f5f5f5;
}
.s-btn { gap: 3px; }
.s-book { margin-left: 28px; }
.s-lang { margin-left: 20px; }
.s-acc { margin-left: 24px; }
.s-notes { margin-left: auto; }
.s-com { margin-left: 26px; }
.views { display: flex; height: 26px; margin-left: 26px; }
.views button { width: 50px; justify-content: center; }
.views .on { background: #dedede; }
.zoom { display: flex; align-items: center; gap: 6px; margin-left: 7px; }
.zoom input {
  appearance: none; width: 126px; height: 14px;
  background: linear-gradient(#666, #666) center / 100% 1px no-repeat, linear-gradient(#666, #666) 50% 50% / 1px 8px no-repeat;
}
.zoom input::-webkit-slider-thumb { appearance: none; width: 6px; height: 14px; background: #666; }
.zoom span { margin: 0 9px 0 9px; }
```
